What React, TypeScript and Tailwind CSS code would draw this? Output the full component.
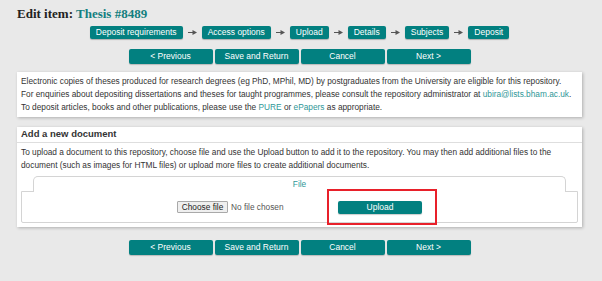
import React from 'react';

const teal = 'bg-[#028080]';

const steps = ['Deposit requirements', 'Access options', 'Upload', 'Details', 'Subjects', 'Deposit'];
const actions = ['< Previous', 'Save and Return', 'Cancel', 'Next >'];

const Arrow: React.FC = () => (
  <svg width="9" height="5" viewBox="0 0 9 5" className="shrink-0">
    <line x1="0" y1="2.5" x2="5" y2="2.5" stroke="#555" strokeWidth="1" />
    <polygon points="4.5,0 9,2.5 4.5,5" fill="#555" />
  </svg>
);

const ActionBar: React.FC<{ className?: string }> = ({ className = '' }) => (
  <div className={`flex justify-center gap-[2px] ${className}`}>
    {actions.map((a) => (
      <button
        key={a}
        className={`${teal} w-[84px] h-[15px] rounded-[2px] text-white text-[8.5px] leading-none shadow-[0_1px_1px_rgba(0,0,0,0.2)]`}
      >
        {a}
      </button>
    ))}
  </div>
);

const App: React.FC = () => {
  return (
    <div
      className="w-[602px] h-[281px] bg-[#e9e9e9] overflow-hidden text-[#333]"
      style={{ fontFamily: '"Liberation Sans", Arial, sans-serif' }}
    >
      <div className="w-[599px]">
        <h1
          className="pt-[6px] pl-[17px] h-[22px] text-[13px] leading-[16px] font-bold text-[#222]"
          style={{ fontFamily: '"Liberation Serif", "Times New Roman", serif' }}
        >
          Edit item: <span className="text-[#137f7f]">Thesis #8489</span>
        </h1>

        <div className="mt-[4px] flex justify-center items-center gap-[5px]">
          {steps.map((s, i) => (
            <React.Fragment key={s}>
              {i > 0 && <Arrow />}
              <span
                className={`${teal} h-[13px] px-[6px] flex items-center rounded-[2px] text-white text-[8.5px] leading-none shadow-[0_1px_1px_rgba(0,0,0,0.25)]`}
              >
                {s}
              </span>
            </React.Fragment>
          ))}
        </div>

        <ActionBar className="mt-[10px]" />

        <div className="mt-[8px] mx-[17px] bg-white px-[4px] pt-[3px] pb-[3px] text-[8.3px] leading-[13px] whitespace-nowrap shadow-[1px_1px_3px_rgba(0,0,0,0.25)]">
          <p>
            Electronic copies of theses produced for research degrees (eg PhD, MPhil, MD) by postgraduates from the
            University are eligible for this repository.
          </p>
          <p>
            For enquiries about depositing dissertations and theses for taught programmes, please consult the repository
            administrator at <span className="text-[#2f9797]">ubira@lists.bham.ac.uk</span>.
          </p>
          <p>
            To deposit articles, books and other publications, please use the{' '}
            <span className="text-[#2f9797]">PURE</span> or <span className="text-[#2f9797]">ePapers</span> as
            appropriate.
          </p>
        </div>

        <div className="mt-[10px] mx-[17px] bg-white shadow-[1px_1px_3px_rgba(0,0,0,0.25)]">
          <div className="h-[16px] px-[4px] flex items-center border-b border-[#dedede] text-[9.5px] font-bold text-[#333]">
            Add a new document
          </div>
          <div className="px-[4px] pt-[3px] pb-[4px]">
            <p className="text-[8.3px] leading-[12.5px] whitespace-nowrap">
              To upload a document to this repository, choose file and use the Upload button to add it to the
              repository. You may then add additional files to the
              <br />
              document (such as images for HTML files) or upload more files to create additional documents.
            </p>
            <div className="mt-[5px]">
              <div className="relative z-10 -mb-px mx-[12px] h-[16px] border border-b-0 border-[#d4d4d4] rounded-t-[5px] bg-white flex justify-center pt-[3px] text-[8.3px] leading-none text-[#2f9797]">
                File
              </div>
              <div className="h-[32px] border border-[#d4d4d4] rounded-b-[2px] flex justify-center items-center">
                <div className="w-[155px] flex items-center text-[8.3px] leading-none">
                  <span className="h-[12px] w-[51px] flex items-center justify-center border border-[#a9a9a9] bg-[#efefef] rounded-[1px] text-[#222]">
                    Choose file
                  </span>
                  <span className="ml-[3px] text-[#555]">No file chosen</span>
                </div>
                <div className="relative ml-[6px] flex">
                  <button
                    className={`${teal} w-[84px] h-[13px] rounded-[2px] text-white text-[8.5px] leading-none shadow-[0_1px_1px_rgba(0,0,0,0.2)]`}
                  >
                    Upload
                  </button>
                  <div className="absolute left-[-11px] right-[-15px] top-[-12px] bottom-[-11px] border-[2px] border-[#e8202a] z-20" />
                </div>
              </div>
            </div>
          </div>
        </div>

        <ActionBar className="mt-[13px]" />
      </div>
    </div>
  );
};

export default App;
